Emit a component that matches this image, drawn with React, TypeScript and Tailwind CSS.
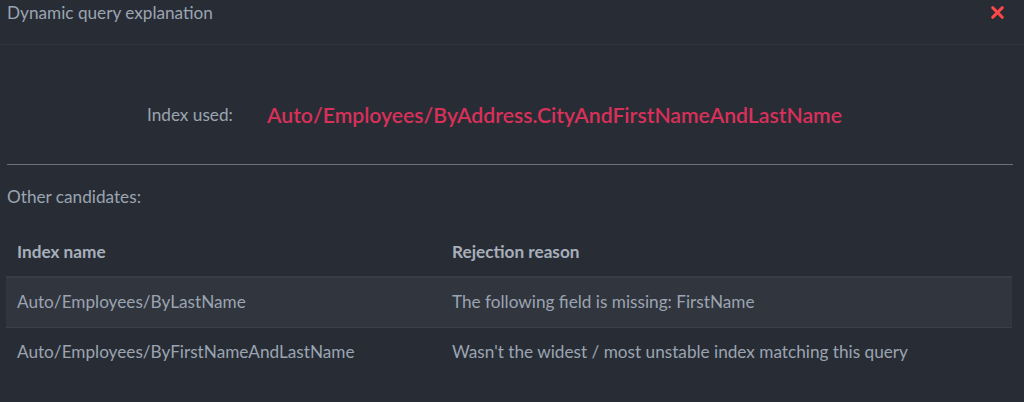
import { X } from 'lucide-react';

const candidates = [
    { name: 'Auto/Employees/ByLastName', reason: 'The following field is missing: FirstName' },
    { name: 'Auto/Employees/ByFirstNameAndLastName', reason: "Wasn't the widest / most unstable index matching this query" },
];

const App = () => {
    return (
        <div className="w-[1024px] h-[402px] overflow-hidden bg-[#282d35] text-[#9ba4b1] text-[17.2px]" style={{ fontFamily: 'Lato, "Noto Sans", sans-serif' }}>
            {/* Header */}
            <div className="h-[45px] border-b border-[#2e333c] flex items-start justify-between pl-[7px] pr-[17px]">
                <h2 className="leading-6 pt-px text-[#9ba4b1]">Dynamic query explanation</h2>
                <button className="mt-[3px] text-[#ff4747]">
                    <X size={19} strokeWidth={4} />
                </button>
            </div>

            <div className="pl-[7px] pr-[11px]">
                {/* Index used */}
                <div className="flex items-center pt-[56px] pb-[35px] pl-[140px]">
                    <span className="w-[120px] leading-7">Index used:</span>
                    <span className="text-[21.2px] leading-7 font-semibold text-[#d9305a]">Auto/Employees/ByAddress.CityAndFirstNameAndLastName</span>
                </div>

                <div className="border-t border-[#6a707c]"></div>

                <p className="mt-[20px] leading-6">Other candidates:</p>

                {/* Table */}
                <table className="w-full mt-[18px] -ml-px border-collapse table-fixed text-left">
                    <colgroup>
                        <col className="w-[435px]" />
                        <col />
                    </colgroup>
                    <thead>
                        <tr className="border-b-2 border-[#383d47]">
                            <th className="h-[50px] px-[11px] font-bold text-[#a7afbb]">Index name</th>
                            <th className="h-[50px] px-[11px] font-bold text-[#a7afbb]">Rejection reason</th>
                        </tr>
                    </thead>
                    <tbody>
                        {candidates.map((c, i) => (
                            <tr key={c.name} className={i === 0 ? 'bg-[#31353e] border-b border-[#3a404a]' : ''}>
                                <td className="h-[50px] px-[11px] whitespace-nowrap">{c.name}</td>
                                <td className="h-[50px] px-[11px] whitespace-nowrap">{c.reason}</td>
                            </tr>
                        ))}
                    </tbody>
                </table>
            </div>
        </div>
    );
};

export default App;
